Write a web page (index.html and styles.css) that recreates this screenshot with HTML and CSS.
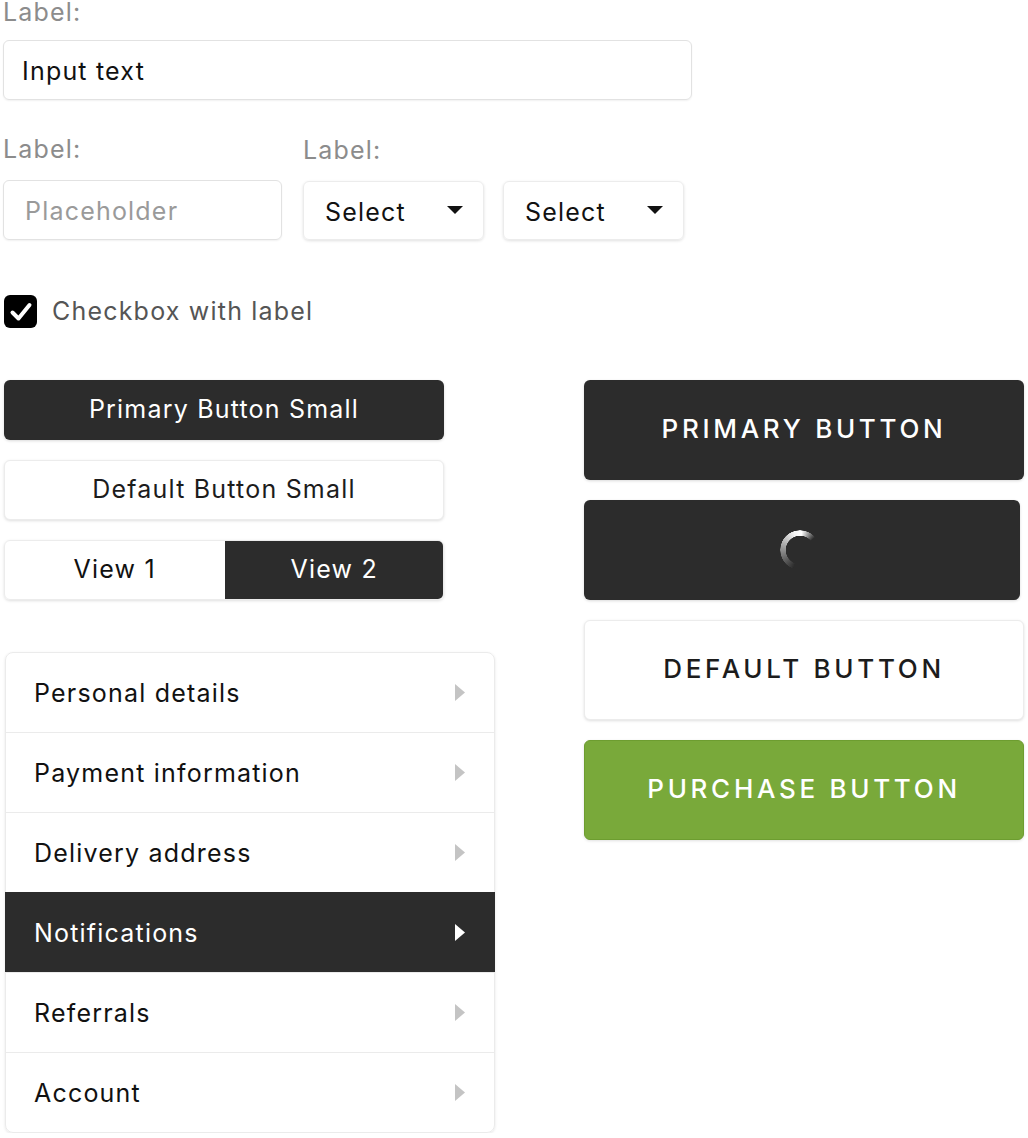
FILE: index.html
```html
<!DOCTYPE html>
<html lang="en">
<head>
<meta charset="utf-8">
<title>UI Kit</title>
<link rel="stylesheet" href="styles.css">
</head>
<body>
<div class="page">
  <div class="field field-wide">
    <label class="label">Label:</label>
    <div class="input">Input text</div>
  </div>

  <div class="row2">
    <div class="field field-ph">
      <label class="label">Label:</label>
      <div class="input placeholder">Placeholder</div>
    </div>
    <div class="field">
      <label class="label">Label:</label>
      <div class="select">Select<svg class="caret" viewBox="0 0 16 8"><polygon points="0,0 16,0 8,8"/></svg></div>
    </div>
    <div class="field">
      <div class="select">Select<svg class="caret" viewBox="0 0 16 8"><polygon points="0,0 16,0 8,8"/></svg></div>
    </div>
  </div>

  <div class="check-row">
    <span class="checkbox"><svg viewBox="0 0 33 33"><path d="M8.5 17.5 L14.5 23.5 L25.5 10" fill="none" stroke="#fff" stroke-width="4" stroke-linecap="round" stroke-linejoin="round"/></svg></span>
    <span class="check-label">Checkbox with label</span>
  </div>

  <div class="grid">
    <div class="col-left">
      <div class="btn-sm btn-dark">Primary Button Small</div>
      <div class="btn-sm btn-light">Default Button Small</div>
      <div class="toggle">
        <div class="toggle-item">View 1</div>
        <div class="toggle-item active">View 2</div>
      </div>
      <div class="list">
        <div class="list-row"><span>Personal details</span><svg class="arrow" viewBox="0 0 10 17"><polygon points="0,0 10,8.5 0,17"/></svg></div>
        <div class="list-row"><span>Payment information</span><svg class="arrow" viewBox="0 0 10 17"><polygon points="0,0 10,8.5 0,17"/></svg></div>
        <div class="list-row"><span>Delivery address</span><svg class="arrow" viewBox="0 0 10 17"><polygon points="0,0 10,8.5 0,17"/></svg></div>
        <div class="list-row active"><span>Notifications</span><svg class="arrow" viewBox="0 0 10 17"><polygon points="0,0 10,8.5 0,17"/></svg></div>
        <div class="list-row"><span>Referrals</span><svg class="arrow" viewBox="0 0 10 17"><polygon points="0,0 10,8.5 0,17"/></svg></div>
        <div class="list-row"><span>Account</span><svg class="arrow" viewBox="0 0 10 17"><polygon points="0,0 10,8.5 0,17"/></svg></div>
      </div>
    </div>
    <div class="col-right">
      <div class="btn-lg btn-dark">PRIMARY BUTTON</div>
      <div class="btn-lg btn-dark btn-loading"><span class="spinner"></span></div>
      <div class="btn-lg btn-light">DEFAULT BUTTON</div>
      <div class="btn-lg btn-green">PURCHASE BUTTON</div>
    </div>
  </div>
</div>
</body>
</html>
```

FILE: styles.css
```css
html, body {
  margin: 0;
  padding: 0;
  background: #fff;
}
body {
  font-family: Inter, "Noto Sans", sans-serif;
  color: #111;
  font-size: 25px;
  letter-spacing: 1.2px;
}
.page {
  padding-left: 3px;
}
.label {
  display: block;
  font-size: 25px;
  line-height: 24px;
  color: #8c8c8c;
  margin-bottom: 16px;
}
.field-wide {
  width: 689px;
}
.input {
  box-sizing: border-box;
  height: 60px;
  border: 1px solid #e2e2e2;
  border-radius: 6px;
  box-shadow: 0 1px 2px rgba(0,0,0,0.06);
  display: flex;
  align-items: center;
  padding: 2px 18px 0;
  color: #111;
}
.input.placeholder {
  color: #9a9a9a;
  padding-left: 21px;
}
.row2 {
  display: flex;
  align-items: flex-end;
  margin-top: 37px;
}
.row2 .label {
  margin-bottom: 19px;
}
.field-ph {
  width: 279px;
  margin-right: 21px;
}
.select {
  box-sizing: border-box;
  width: 181px;
  height: 59px;
  margin-right: 19px;
  border: 1px solid #ececec;
  border-radius: 6px;
  box-shadow: 0 1px 3px rgba(0,0,0,0.12);
  display: flex;
  align-items: center;
  justify-content: space-between;
  padding: 2px 20px 0 21px;
  color: #111;
}
.caret {
  width: 16px;
  height: 8px;
  fill: #111;
  margin-top: -4px;
}
.check-row {
  display: flex;
  align-items: center;
  margin-top: 54px;
  margin-left: 1px;
  height: 34px;
}
.checkbox {
  width: 33px;
  height: 33px;
  border-radius: 6px;
  background: #000;
  display: block;
  margin-right: 15px;
}
.checkbox svg {
  display: block;
  width: 33px;
  height: 33px;
}
.check-label {
  color: #555;
}
.grid {
  display: grid;
  grid-template-columns: 440px 440px;
  column-gap: 140px;
  margin-top: 52px;
  margin-left: 1px;
  align-items: start;
}
.col-left, .col-right {
  display: flex;
  flex-direction: column;
  gap: 20px;
}
.btn-sm, .btn-lg {
  box-sizing: border-box;
  border-radius: 6px;
  display: flex;
  align-items: center;
  justify-content: center;
}
.btn-sm {
  height: 60px;
  padding-bottom: 2px;
}
.btn-lg {
  height: 100px;
  font-size: 26px;
  font-weight: 500;
  letter-spacing: 3.7px;
  padding-bottom: 4px;
}
.btn-dark {
  background: #2c2c2c;
  color: #fff;
  box-shadow: 0 1px 3px rgba(0,0,0,0.15);
}
.btn-light {
  background: #fff;
  color: #1c1c1c;
  border: 1px solid #ececec;
  box-shadow: 0 1px 3px rgba(0,0,0,0.13);
}
.btn-green {
  background: #79a93a;
  border: 1px solid #6d9d30;
  color: #fff;
  box-shadow: 0 1px 3px rgba(0,0,0,0.12);
}
.btn-loading {
  width: 436px;
  padding-bottom: 0;
}
.spinner {
  width: 40px;
  height: 40px;
  border-radius: 50%;
  background: conic-gradient(from 200deg, rgba(255,255,255,0) 0deg, rgba(255,255,255,0.95) 140deg, #fff 165deg, rgba(255,255,255,0) 210deg, rgba(255,255,255,0) 360deg);
  -webkit-mask: radial-gradient(circle, transparent 14px, #000 14.5px, #000 19.5px, transparent 20px);
  mask: radial-gradient(circle, transparent 14px, #000 14.5px, #000 19.5px, transparent 20px);
  margin-left: -4px;
}
.toggle {
  display: flex;
  height: 60px;
  border-radius: 6px;
  overflow: hidden;
  box-shadow: 0 1px 3px rgba(0,0,0,0.13);
  box-sizing: border-box;
  border: 1px solid #ececec;
}
.toggle-item {
  flex: 1;
  display: flex;
  align-items: center;
  justify-content: center;
  padding-bottom: 2px;
  color: #111;
}
.toggle-item.active {
  background: #2c2c2c;
  color: #fff;
  margin: -1px -1px -1px 0;
}
.list {
  width: 490px;
  margin-top: 32px;
  margin-left: 1px;
  border: 1px solid #ebebeb;
  border-radius: 8px;
  box-shadow: 0 1px 3px rgba(0,0,0,0.1);
  box-sizing: border-box;
}
.list-row {
  height: 80px;
  box-sizing: border-box;
  display: flex;
  align-items: center;
  justify-content: space-between;
  padding: 0 29px 0 28px;
  border-top: 1px solid #ebebeb;
  color: #111;
}
.list-row:first-child {
  border-top: none;
  height: 79px;
}
.list-row.active {
  background: #2c2c2c;
  color: #fff;
  margin: 0 -1px;
  padding: 0 30px 0 29px;
  border-top-color: #2c2c2c;
}
.arrow {
  width: 10px;
  height: 17px;
  fill: #c4c4c4;
}
.list-row.active .arrow {
  fill: #fff;
}
```
